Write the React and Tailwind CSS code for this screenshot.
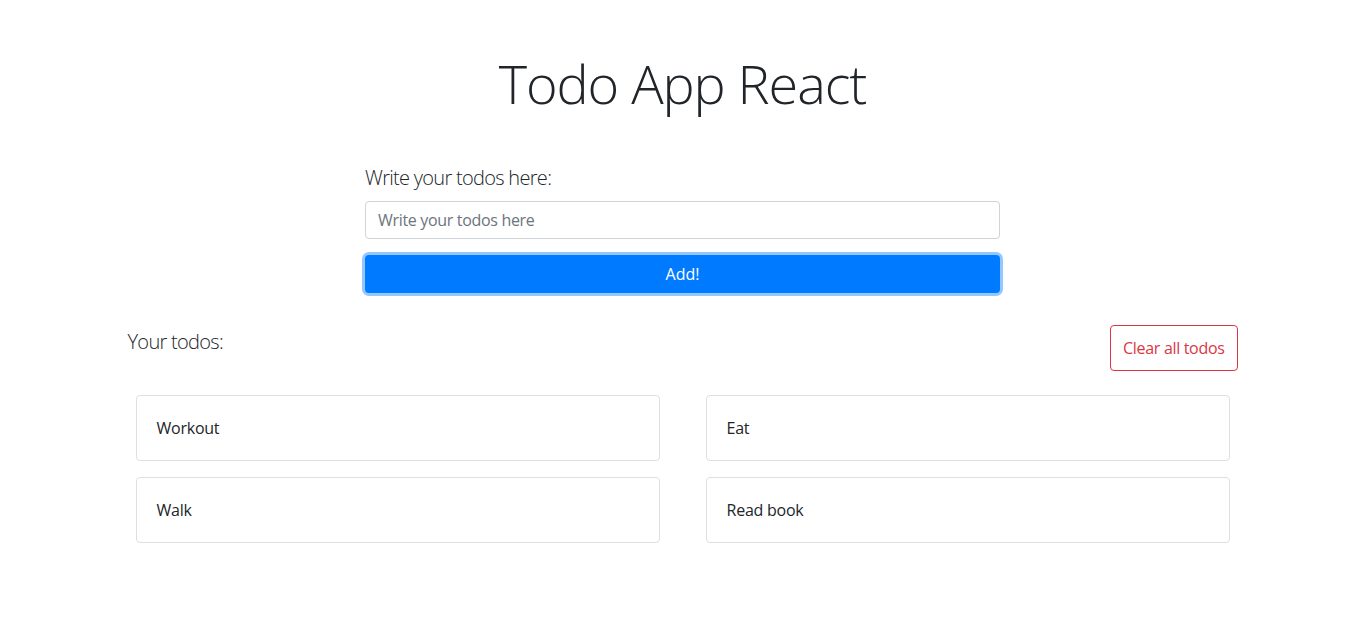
const TODOS = ["Workout", "Eat", "Walk", "Read book"];

function TodoCard({ text }) {
  return (
    <div className="rounded border border-[#dfdfdf] bg-white px-5 py-5 text-base leading-6 tracking-[-0.015em] text-[#212529]">
      {text}
    </div>
  );
}

export default function App() {
  return (
    <div
      className="min-h-screen bg-white text-[#212529]"
      style={{ fontFamily: '"Open Sans", "Noto Sans", sans-serif' }}
    >
      <div className="mx-auto w-[1110px] pt-[50px]">
        <h1 className="text-center text-[54px] font-light leading-[67px] tracking-[-0.02em]">
          Todo App React
        </h1>

        <form className="mx-auto mt-[46px] w-[635px]" onSubmit={(e) => e.preventDefault()}>
          <label className="mb-2 block text-xl font-light leading-[30px] tracking-[-0.035em]">
            Write your todos here:
          </label>
          <input
            type="text"
            placeholder="Write your todos here"
            className="block h-[38px] w-full rounded border border-[#ced4da] px-3 text-base tracking-[-0.02em] text-[#495057] outline-none placeholder:text-[#6c757d]"
          />
          <button
            type="submit"
            className="mt-4 block h-[38px] w-full rounded bg-[#007bff] text-base text-white shadow-[0_0_0_3px_rgba(38,143,255,0.5)]"
          >
            Add!
          </button>
        </form>

        <div className="mt-8 flex items-start justify-between">
          <div className="mt-[2px] text-xl font-light leading-[30px] tracking-[-0.035em]">Your todos:</div>
          <button
            type="button"
            className="h-[46px] rounded border border-[#dc3545] px-3 text-base tracking-[-0.02em] text-[#dc3545]"
          >
            Clear all todos
          </button>
        </div>

        <div className="mt-6 grid grid-cols-2 gap-x-[46px] gap-y-4 px-2">
          {TODOS.map((todo) => (
            <TodoCard key={todo} text={todo} />
          ))}
        </div>
      </div>
    </div>
  );
}
